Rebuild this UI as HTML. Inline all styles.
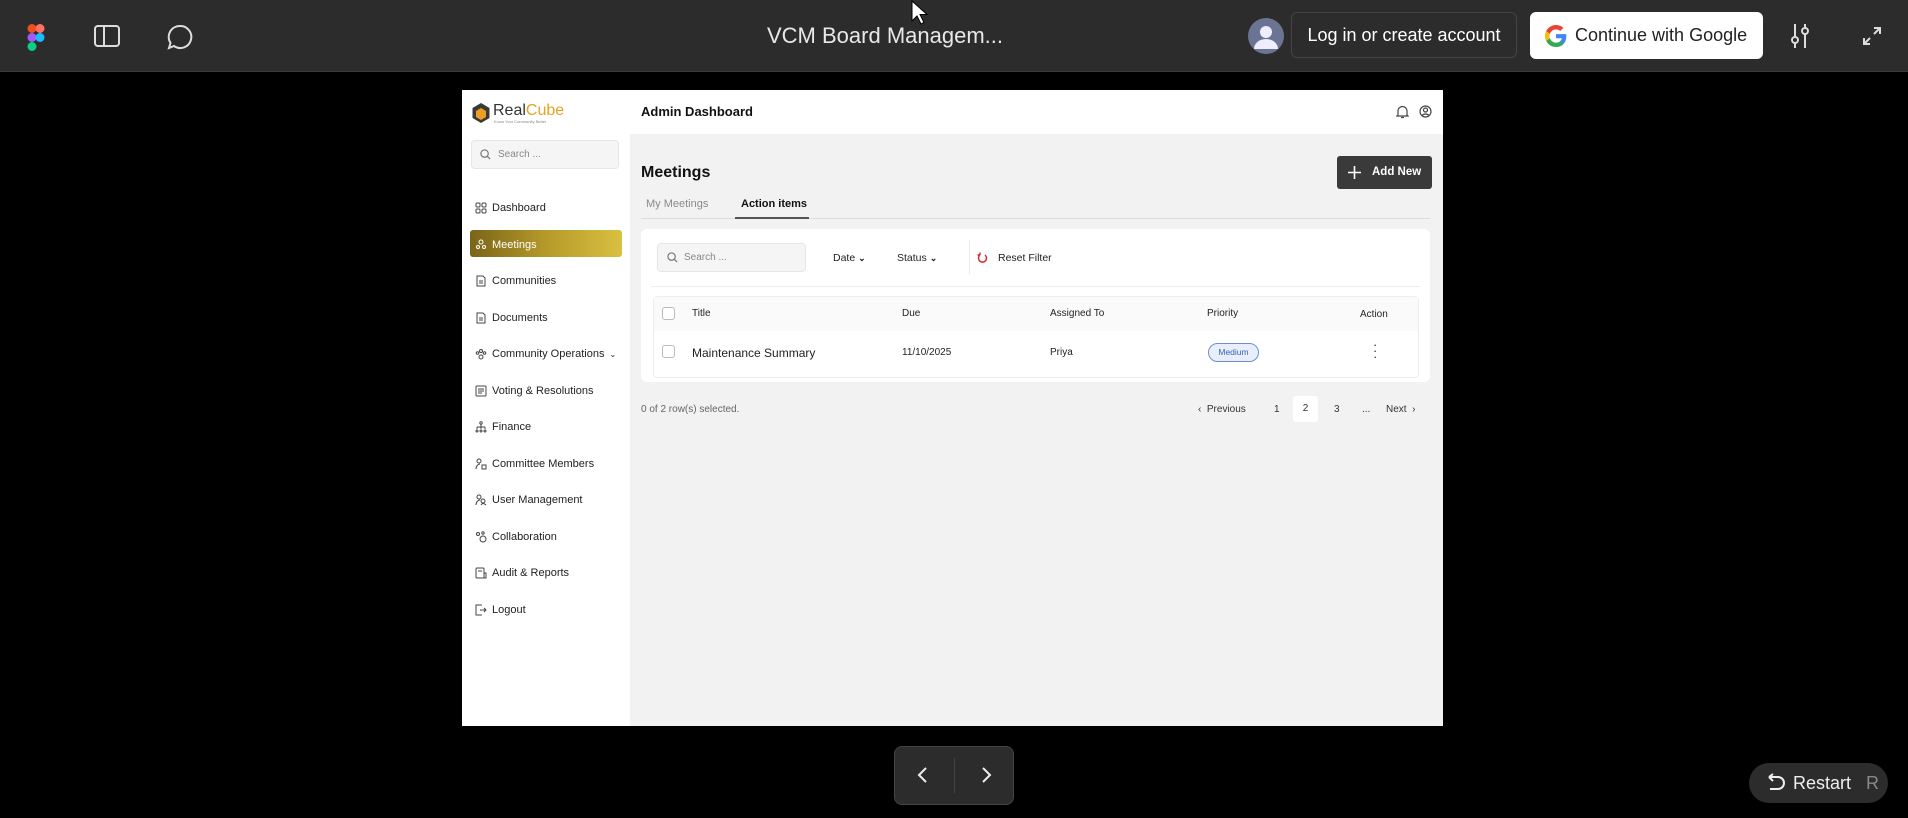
<!DOCTYPE html>
<html><head><meta charset="utf-8"><style>
*{margin:0;padding:0;box-sizing:border-box}
body{width:1908px;height:818px;background:#000;font-family:"Liberation Sans",sans-serif;position:relative;overflow:hidden}
.a{position:absolute}
.top{left:0;top:0;width:1908px;height:72px;background:#2c2c2c;border-bottom:1px solid #3a3a3a}
.nav{left:475px;font-size:11px;color:#222;display:flex;align-items:center;gap:5px}
.nav svg{width:12px;height:12px}
.th{font-size:10px;color:#222;top:308px}
</style></head><body>
<div class="a top"></div>
<svg class="a" style="left:26px;top:24px" width="20" height="28" viewBox="0 0 20 28"><circle cx="6" cy="4.5" r="4.5" fill="#f24e1e"/><circle cx="14" cy="4.5" r="4.5" fill="#ff7262"/><rect x="1.5" y="9" width="9" height="9" rx="4.5" fill="#a259ff"/><circle cx="14" cy="13.5" r="4.5" fill="#1abcfe"/><circle cx="6" cy="22.5" r="4.5" fill="#0acf83"/></svg>
<svg class="a" style="left:94px;top:25px" width="26" height="22" viewBox="0 0 26 22" fill="none" stroke="#ddd" stroke-width="2"><rect x="1" y="1" width="24" height="20" rx="3"/><line x1="10" y1="1" x2="10" y2="21"/></svg>
<svg class="a" style="left:167px;top:24px" width="26" height="26" viewBox="0 0 26 26" fill="none" stroke="#ddd" stroke-width="2"><path d="M13 2a11 11 0 1 1-6 20l-5 2 1.5-5A11 11 0 0 1 13 2z"/></svg>
<div class="a" style="left:700px;top:23px;width:370px;text-align:center;color:#e8e8e8;font-size:22px">VCM Board Managem...</div>
<svg class="a" style="left:910px;top:0" width="18" height="26" viewBox="0 0 18 26"><path d="M2 1v20l5-5 4 8 3-1.5-4-8h7z" fill="#fff" stroke="#000"/></svg>
<svg class="a" style="left:1248px;top:18px" width="36" height="36" viewBox="0 0 36 36"><circle cx="18" cy="18" r="18" fill="#6b7593"/><circle cx="18" cy="14" r="6" fill="#eef"/><path d="M6 31a12 10 0 0 1 24 0z" fill="#eef"/></svg>
<div class="a" style="left:1291px;top:12px;width:226px;height:46px;border:1px solid #444;border-radius:6px;color:#fff;font-size:18px;line-height:44px;text-align:center">Log in or create account</div>
<div class="a" style="left:1530px;top:12px;width:233px;height:47px;background:#fff;border-radius:6px;color:#222;font-size:18px;line-height:47px;padding-left:45px">Continue with Google</div>
<svg class="a" style="left:1545px;top:25px" width="22" height="22" viewBox="0 0 48 48"><path fill="#EA4335" d="M24 9.5c3.5 0 6.7 1.2 9.2 3.6l6.9-6.9C35.9 2.4 30.5 0 24 0 14.6 0 6.6 5.4 2.6 13.3l8 6.2C12.5 13.7 17.8 9.5 24 9.5z"/><path fill="#4285F4" d="M46.5 24.5c0-1.6-.1-3.1-.4-4.5H24v9h12.7c-.6 3-2.300 5.5-4.8 7.2l7.7 6c4.5-4.2 6.9-10.3 6.9-17.7z"/><path fill="#FBBC05" d="M10.5 28.7A14.5 14.5 0 0 1 9.5 24c0-1.6.3-3.2.8-4.7l-8-6.2A24 24 0 0 0 0 24c0 3.9.9 7.5 2.6 10.7z"/><path fill="#34A853" d="M24 48c6.5 0 11.9-2.1 15.9-5.8l-7.7-6c-2.2 1.5-4.9 2.3-8.2 2.3-6.2 0-11.5-4.2-13.4-9.9l-8 6.2C6.6 42.6 14.6 48 24 48z"/></svg>
<svg class="a" style="left:1788px;top:22px" width="24" height="28" viewBox="0 0 24 28" fill="none" stroke="#ddd" stroke-width="2"><line x1="7" y1="2" x2="7" y2="26"/><line x1="17" y1="2" x2="17" y2="26"/><circle cx="7" cy="18" r="3" fill="#2c2c2c"/><circle cx="17" cy="9" r="3" fill="#2c2c2c"/></svg>
<svg class="a" style="left:1862px;top:26px" width="20" height="20" viewBox="0 0 20 20" fill="none" stroke="#ddd" stroke-width="2"><path d="M12 2h6v6M18 2l-6 6M8 18H2v-6M2 18l6-6"/></svg>

<div class="a" style="left:462px;top:90px;width:981px;height:636px;background:#f2f2f2"></div>
<div class="a" style="left:462px;top:90px;width:168px;height:636px;background:#fff"></div>
<div class="a" style="left:630px;top:90px;width:813px;height:44px;background:#fff"></div>
<svg class="a" style="left:471px;top:102px" width="20" height="22" viewBox="0 0 20 22"><path d="M10 1l8.5 5v10L10 21 1.5 16V6z" fill="#3a3a3a"/><path d="M10 6l5 3v6l-5 3-5-3V9z" fill="#f0a020"/></svg>
<div class="a" style="left:493px;top:102px;font-size:16px;color:#333">Real<span style="color:#e8a21e">Cube</span></div>
<div class="a" style="left:494px;top:119px;font-size:4px;color:#888">Know Your Community Better</div>
<div class="a" style="left:471px;top:140px;width:148px;height:29px;background:#f5f5f5;border:1px solid #e6e6e6;border-radius:4px;font-size:10px;color:#888;line-height:27px;padding-left:26px">Search ...</div>
<svg class="a" style="left:480px;top:149px" width="11" height="11" viewBox="0 0 12 12" fill="none" stroke="#777" stroke-width="1.3"><circle cx="5" cy="5" r="4"/><path d="M8 8l3 3"/></svg>
<div class="a" style="left:470px;top:230px;width:152px;height:27px;border-radius:3px;background:linear-gradient(90deg,#7a6418,#b59a2a 50%,#d9c040)"></div>
<div class="a nav" style="top:202px"><svg viewBox="0 0 12 12" fill="none" stroke="#444"><rect x="1" y="1" width="4" height="4" rx="1"/><rect x="7" y="1" width="4" height="4" rx="1"/><rect x="1" y="7" width="4" height="4" rx="1"/><rect x="7" y="7" width="4" height="4" rx="1"/></svg>Dashboard</div>
<div class="a nav" style="top:239px;color:#fff"><svg viewBox="0 0 12 12" fill="none" stroke="#fff"><circle cx="6" cy="3" r="2"/><circle cx="3" cy="8" r="1.5"/><circle cx="9" cy="8" r="1.5"/></svg>Meetings</div>
<div class="a nav" style="top:275px"><svg viewBox="0 0 12 12" fill="none" stroke="#444"><path d="M2 1h6l2 2v8H2z"/><path d="M4 6h4M4 8h4"/></svg>Communities</div>
<div class="a nav" style="top:312px"><svg viewBox="0 0 12 12" fill="none" stroke="#444"><path d="M2 1h6l2 2v8H2z"/><path d="M4 6h4M4 8h4"/></svg>Documents</div>
<div class="a nav" style="top:348px"><svg viewBox="0 0 12 12" fill="none" stroke="#444"><circle cx="6" cy="3" r="1.5"/><circle cx="2.5" cy="5" r="1.3"/><circle cx="9.5" cy="5" r="1.3"/><circle cx="6" cy="9" r="2"/></svg>Community Operations <span style="font-size:8px">⌄</span></div>
<div class="a nav" style="top:385px"><svg viewBox="0 0 12 12" fill="none" stroke="#444"><rect x="1" y="1" width="10" height="10" rx="1"/><path d="M3 4h6M3 6h6M3 8h4"/></svg>Voting &amp; Resolutions</div>
<div class="a nav" style="top:421px"><svg viewBox="0 0 12 12" fill="none" stroke="#444"><circle cx="6" cy="2" r="1.2"/><path d="M6 3v3M2 6h8M2 6v2M6 6v2M10 6v2"/><circle cx="2" cy="10" r="1"/><circle cx="6" cy="10" r="1"/><circle cx="10" cy="10" r="1"/></svg>Finance</div>
<div class="a nav" style="top:458px"><svg viewBox="0 0 12 12" fill="none" stroke="#444"><circle cx="4" cy="3" r="2"/><path d="M1 11c0-3 2-5 4-5"/><rect x="7" y="7" width="4" height="4"/></svg>Committee Members</div>
<div class="a nav" style="top:494px"><svg viewBox="0 0 12 12" fill="none" stroke="#444"><circle cx="4" cy="3" r="2"/><path d="M1 11c0-3 2-5 4-5"/><circle cx="8" cy="7" r="2"/><path d="M6 11c1-2 3-2 5 0"/></svg>User Management</div>
<div class="a nav" style="top:531px"><svg viewBox="0 0 12 12" fill="none" stroke="#444"><circle cx="3" cy="3" r="1.5"/><circle cx="8" cy="2" r="1.2"/><circle cx="8" cy="8" r="3"/></svg>Collaboration</div>
<div class="a nav" style="top:567px"><svg viewBox="0 0 12 12" fill="none" stroke="#444"><rect x="1" y="1" width="8" height="10" rx="1"/><path d="M3 4h4M9 6h2v5H9"/></svg>Audit &amp; Reports</div>
<div class="a nav" style="top:604px"><svg viewBox="0 0 12 12" fill="none" stroke="#444"><path d="M7 1H1v10h6M5 6h6M9 4l2 2-2 2"/></svg>Logout</div>

<div class="a" style="left:641px;top:104px;font-size:13px;font-weight:bold;color:#111">Admin Dashboard</div>
<svg class="a" style="left:1396px;top:105px" width="13" height="14" viewBox="0 0 13 14" fill="none" stroke="#444" stroke-width="1.2"><path d="M2 10V6a4.5 4.5 0 0 1 9 0v4l1 1H1z"/><path d="M5 12.5h3"/></svg>
<svg class="a" style="left:1419px;top:105px" width="13" height="13" viewBox="0 0 13 13" fill="none" stroke="#444" stroke-width="1.2"><circle cx="6.5" cy="6.5" r="5.5"/><circle cx="6.5" cy="5" r="2"/><path d="M3 10.5c2-2 5-2 7 0"/></svg>

<div class="a" style="left:641px;top:164px;font-size:16px;font-weight:bold;color:#111">Meetings</div>
<div class="a" style="left:1337px;top:156px;width:95px;height:33px;background:#3a3a3a;border-radius:3px;color:#fff;font-size:11.5px;font-weight:bold;line-height:33px;padding-left:35px">Add New</div>
<svg class="a" style="left:1347px;top:165px" width="15" height="15" viewBox="0 0 15 15" stroke="#fff" stroke-width="1.6"><path d="M7.5 1v13M1 7.5h13"/></svg>
<div class="a" style="left:646px;top:198px;font-size:11px;color:#8a8a8a">My Meetings</div>
<div class="a" style="left:741px;top:198px;font-size:11px;color:#111;font-weight:bold">Action items</div>
<div class="a" style="left:641px;top:218px;width:789px;height:1px;background:#ddd"></div>
<div class="a" style="left:735px;top:217px;width:74px;height:2px;background:#555"></div>

<div class="a" style="left:641px;top:229px;width:789px;height:153px;background:#fff;border-radius:6px"></div>
<div class="a" style="left:657px;top:243px;width:149px;height:29px;background:#f5f5f5;border:1px solid #e6e6e6;border-radius:4px;font-size:10px;color:#888;line-height:27px;padding-left:26px">Search ...</div>
<svg class="a" style="left:667px;top:252px" width="11" height="11" viewBox="0 0 12 12" fill="none" stroke="#777" stroke-width="1.3"><circle cx="5" cy="5" r="4"/><path d="M8 8l3 3"/></svg>
<div class="a" style="left:833px;top:252px;font-size:10.5px;color:#222">Date <b style="font-size:9px">⌄</b></div>
<div class="a" style="left:897px;top:252px;font-size:10.5px;color:#222">Status <b style="font-size:9px">⌄</b></div>
<div class="a" style="left:969px;top:240px;width:1px;height:34px;background:#e8e8e8"></div>
<svg class="a" style="left:977px;top:252px" width="11" height="12" viewBox="0 0 11 12" fill="none" stroke="#d22" stroke-width="1.4"><path d="M3 3a4 4 0 1 0 5 0M3 3V0.5M3 3H0.5"/></svg>
<div class="a" style="left:998px;top:252px;font-size:10.5px;color:#222">Reset Filter</div>
<div class="a" style="left:651px;top:286px;width:769px;height:1px;background:#eee"></div>
<div class="a" style="left:653px;top:296px;width:766px;height:82px;border:1px solid #eee;border-radius:4px"></div>
<div class="a" style="left:654px;top:297px;width:764px;height:34px;background:#fafafa"></div>
<div class="a" style="left:662px;top:307px;width:13px;height:13px;border:1px solid #bbb;border-radius:3px;background:#fff"></div>
<div class="a" style="left:662px;top:345px;width:13px;height:13px;border:1px solid #bbb;border-radius:3px;background:#fff"></div>
<div class="a th" style="left:692px">Title</div>
<div class="a th" style="left:902px">Due</div>
<div class="a th" style="left:1050px">Assigned To</div>
<div class="a th" style="left:1207px">Priority</div>
<div class="a th" style="left:1360px;top:309px">Action</div>
<div class="a" style="left:692px;top:346px;font-size:12px;color:#222">Maintenance Summary</div>
<div class="a" style="left:902px;top:347px;font-size:10px;color:#222">11/10/2025</div>
<div class="a" style="left:1050px;top:347px;font-size:10px;color:#222">Priya</div>
<div class="a" style="left:1208px;top:343px;width:51px;height:19px;border:1px solid #6d8fd0;background:#e8effa;border-radius:10px;font-size:8.5px;color:#3b63b0;text-align:center;line-height:17px">Medium</div>
<div class="a" style="left:1373px;top:342px;font-size:13px;color:#333;line-height:6px">·<br>·<br>·</div>

<div class="a" style="left:641px;top:404px;font-size:10px;color:#666">0 of 2 row(s) selected.</div>
<div class="a" style="left:1198px;top:404px;font-size:10px;color:#333">‹&nbsp; Previous</div>
<div class="a" style="left:1274px;top:404px;font-size:10px;color:#333">1</div>
<div class="a" style="left:1293px;top:396px;width:25px;height:26px;background:#fff;border-radius:3px;font-size:10px;color:#333;text-align:center;line-height:26px">2</div>
<div class="a" style="left:1334px;top:404px;font-size:10px;color:#333">3</div>
<div class="a" style="left:1362px;top:404px;font-size:10px;color:#333">...</div>
<div class="a" style="left:1386px;top:404px;font-size:10px;color:#333">Next &nbsp;›</div>

<div class="a" style="left:894px;top:746px;width:120px;height:59px;background:#2c2c2c;border:1px solid #444;border-radius:8px"></div>
<div class="a" style="left:954px;top:758px;width:1px;height:35px;background:#444"></div>
<svg class="a" style="left:916px;top:766px" width="14" height="18" viewBox="0 0 14 18" fill="none" stroke="#eee" stroke-width="2"><path d="M10 2L3 9l7 7"/></svg>
<svg class="a" style="left:979px;top:766px" width="14" height="18" viewBox="0 0 14 18" fill="none" stroke="#eee" stroke-width="2"><path d="M4 2l7 7-7 7"/></svg>
<div class="a" style="left:1749px;top:763px;width:139px;height:40px;background:#2c2c2c;border-radius:20px;color:#eee;font-size:18px;line-height:40px;padding-left:44px">Restart <span style="color:#888;margin-left:10px">R</span></div>
<svg class="a" style="left:1764px;top:773px" width="22" height="20" viewBox="0 0 22 20" fill="none" stroke="#eee" stroke-width="2"><path d="M5 4h9a6 6 0 0 1 0 12H6M5 4l4-3M5 4l4 4"/></svg>
</body></html>
